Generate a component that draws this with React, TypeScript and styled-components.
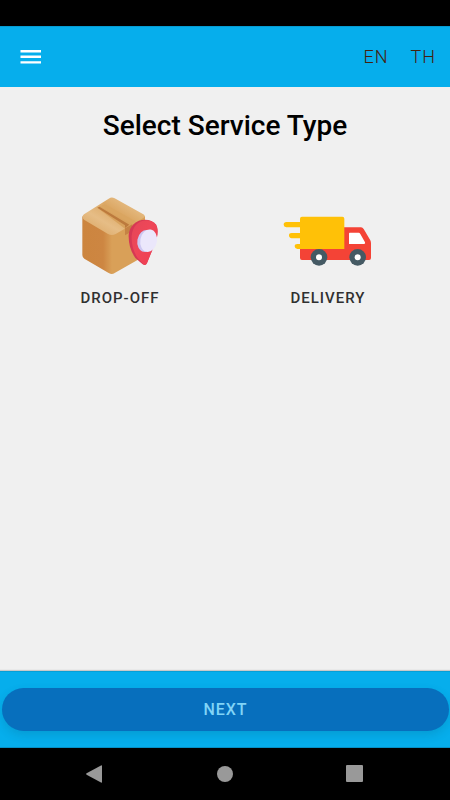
import React, { useState } from "react";
import styled, { createGlobalStyle } from "styled-components";

const GlobalStyle = createGlobalStyle`
  * { box-sizing: border-box; }
  body { margin: 0; background: #f0f0f0; }
  body, button { font-family: Roboto, "Liberation Sans", sans-serif; }
  button { border: 0; padding: 0; background: none; color: inherit; cursor: pointer; }
  svg { display: block; }
`;

const Screen = styled.div`
  display: flex;
  flex-direction: column;
  min-height: 100vh;
`;

const StatusBar = styled.div`
  height: 26px;
  background: #000;
`;

const Toolbar = styled.header`
  display: flex;
  align-items: center;
  justify-content: space-between;
  height: 61px;
  padding: 0 14px 0 20px;
  background: #06aeec;
  border-top: 1px solid #069bd2;
`;

const Languages = styled.div`
  display: flex;
  gap: 22px;
`;

const LanguageButton = styled.button`
  font-size: 18px;
  font-weight: 300;
  line-height: 24px;
  letter-spacing: 1px;
  color: #45200c;
`;

const Content = styled.main`
  flex: 1;
  padding: 20px 0;
  background: #f0f0f0;
`;

const Title = styled.h1`
  margin: 0;
  font-size: 28px;
  font-weight: 500;
  line-height: 38px;
  text-align: center;
  color: #000;
`;

const Services = styled.div`
  display: grid;
  grid-template-columns: 1fr 1fr;
  padding: 50px 18px 0 16px;
`;

const ServiceButton = styled.button`
  display: flex;
  flex-direction: column;
  align-items: center;
  gap: 11px;
  font-size: 15px;
  font-weight: 500;
  line-height: 20px;
  letter-spacing: 1px;
  color: #303030;
`;

const Artwork = styled.span`
  display: flex;
  align-items: center;
  height: 82px;
`;

const Footer = styled.footer`
  padding: 16px 1px 16px 2px;
  background: #06aeec;
  border-top: 1px solid #069fd6;
  border-bottom: 1px solid #0690c6;
  box-shadow: 0 -1px 1px rgba(0, 0, 0, 0.16);
`;

const NextButton = styled.button`
  display: block;
  width: 100%;
  height: 43px;
  border-radius: 22px;
  background: #076fbd;
  box-shadow: 0 4px 10px rgba(0, 60, 90, 0.16);
  font-size: 16px;
  font-weight: 500;
  letter-spacing: 1px;
  color: #80d4f7;
`;

const SystemNav = styled.nav`
  display: grid;
  grid-template-columns: repeat(3, 130px);
  justify-content: center;
  height: 52px;
  background: #000;
`;

const NavButton = styled.button`
  display: flex;
  align-items: center;
  justify-content: center;
`;

function MenuIcon() {
  return (
    <svg width="22" height="16" viewBox="0 0 22 16" fill="#fff" aria-hidden="true">
      <path d="M.5 1h20.5v2.4H.5zM.5 6.6h20.5v2.4H.5zM.5 12.2h20.5v2.4H.5z" />
    </svg>
  );
}

function ParcelIcon() {
  return (
    <svg width="77" height="78" viewBox="36 36 231 234" aria-hidden="true">
      <defs>
        <linearGradient id="parcel-top" x1="0" y1="1" x2="1" y2="0">
          <stop offset="0" stopColor="#d8a05a" />
          <stop offset=".35" stopColor="#e6bd86" />
          <stop offset=".6" stopColor="#dca865" />
          <stop offset=".78" stopColor="#e4b97f" />
          <stop offset="1" stopColor="#d59c56" />
        </linearGradient>
        <linearGradient id="parcel-left" x1="0" y1="0" x2="1" y2="0">
          <stop offset="0" stopColor="#cc853f" />
          <stop offset=".7" stopColor="#cd8642" />
          <stop offset="1" stopColor="#d9a058" />
        </linearGradient>
        <linearGradient id="parcel-pin" x1="0" y1="0" x2="1" y2="1">
          <stop offset="0" stopColor="#e44658" />
          <stop offset=".4" stopColor="#ee4758" />
          <stop offset="1" stopColor="#f03c51" />
        </linearGradient>
      </defs>
      <path d="M125 140L225 93V212L134 264Q130 267 125 267Z" fill="#d9a058" />
      <path d="M37 94L126 148V267Q121 267 116 264L43 221Q37 217 37 210Z" fill="url(#parcel-left)" />
      <path d="M42 88L116 41Q125 35 134 40L220 88Q228 93 220 99L137 147Q126 153 114 147L42 104Q33 96 42 88Z" fill="url(#parcel-top)" />
      <path d="M92 63L104 57L195 108L187 119Z" fill="#daa560" />
      <path d="M82 68L91 63L187 118L165 131Z" fill="#d8a25d" />
      <path d="M82 68L88 65L178 119L165 129L165 121Z" fill="#bc7a3d" />
      <path d="M165 130L187 118V139L165 151Z" fill="#c58244" />
      <path d="M176 150C178 122 199 104 225 104Q246 104 257 118C266 130 263 154 257 170L231 234Q227 243 218 238L196 219C182 199 175 176 176 150Z" fill="#d63854" />
      <path d="M185 154C187 125 204 107 229 106Q247 106 257 118C266 130 263 154 257 170L231 234Q227 243 220 238L203 219C190 200 184 178 185 154Z" fill="url(#parcel-pin)" />
      <ellipse cx="227" cy="168" rx="25" ry="33" transform="rotate(10 227 168)" fill="#cdc7f1" />
      <ellipse cx="236" cy="167" rx="25" ry="34" transform="rotate(10 236 167)" fill="#ebe7fb" />
    </svg>
  );
}

function TruckIcon() {
  return (
    <svg width="90" height="60" viewBox="24 63 270 180" aria-hidden="true">
      <path d="M75 187H205V127H258Q263 127 266 132L286 166Q288 170 288 175V219Q288 225 282 225H81Q75 225 75 219Z" fill="#f44336" />
      <path d="M224 143H251Q254 143 256 147L270 172Q272 177 267 177H222V146Q222 143 224 143Z" fill="#fff" />
      <path d="M81 95H202Q208 95 208 101V192H67Q59 190 59 184Q59 177 67 177H75V160H50Q42 159 42 151Q42 144 50 144H75V127H34Q26 126 26 119Q26 111 34 111H75V101Q75 95 81 95Z" fill="#ffc107" />
      <circle cx="132" cy="217" r="25" fill="#455a64" />
      <circle cx="132" cy="217" r="9" fill="#fff" />
      <circle cx="248" cy="217" r="25" fill="#455a64" />
      <circle cx="248" cy="217" r="9" fill="#fff" />
    </svg>
  );
}

function BackIcon() {
  return (
    <svg width="18" height="18" viewBox="0 0 18 18" aria-hidden="true">
      <path d="M15 .5Q16 0 16 1V17Q16 18 15 17.5L.6 9.7Q-.3 9 .6 8.3Z" fill="#999" />
    </svg>
  );
}

function HomeIcon() {
  return (
    <svg width="16" height="16" viewBox="0 0 16 16" aria-hidden="true">
      <circle cx="8" cy="8" r="8" fill="#999" />
    </svg>
  );
}

function RecentIcon() {
  return (
    <svg width="18" height="18" viewBox="0 0 18 18" aria-hidden="true">
      <rect width="17" height="17" rx="1" fill="#999" />
    </svg>
  );
}

const services = [
  { id: "drop-off", label: "DROP-OFF", icon: <ParcelIcon /> },
  { id: "delivery", label: "DELIVERY", icon: <TruckIcon /> },
];

export default function App() {
  const [selected, setSelected] = useState<string | null>(null);

  return (
    <Screen>
      <GlobalStyle />
      <StatusBar />
      <Toolbar>
        <button type="button" aria-label="Menu"><MenuIcon /></button>
        <Languages>
          <LanguageButton type="button">EN</LanguageButton>
          <LanguageButton type="button">TH</LanguageButton>
        </Languages>
      </Toolbar>
      <Content>
        <Title>Select Service Type</Title>
        <Services>
          {services.map(({ id, label, icon }) => (
            <ServiceButton
              key={id}
              type="button"
              aria-pressed={selected === id}
              onClick={() => setSelected(id)}
            >
              <Artwork>{icon}</Artwork>
              {label}
            </ServiceButton>
          ))}
        </Services>
      </Content>
      <Footer>
        <NextButton type="button">NEXT</NextButton>
      </Footer>
      <SystemNav aria-label="System">
        <NavButton type="button" aria-label="Back"><BackIcon /></NavButton>
        <NavButton type="button" aria-label="Home"><HomeIcon /></NavButton>
        <NavButton type="button" aria-label="Recent apps"><RecentIcon /></NavButton>
      </SystemNav>
    </Screen>
  );
}
